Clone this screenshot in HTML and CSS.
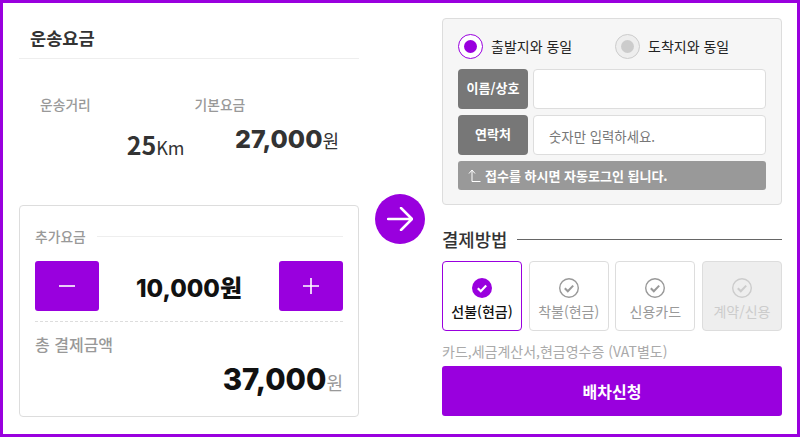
FILE: index.html
```html
<!DOCTYPE html>
<html lang="ko">
<head>
    <meta charset="UTF-8">
    <meta name="viewport" content="width=device-width, initial-scale=1.0">
    <title>운송요금</title>
    <link rel="stylesheet" href="styles.css">
</head>
<body>
    <div class="frame">
        <div class="left">
            <h2 class="fare-title">운송요금</h2>
            <div class="fare-stats">
                <div class="stat">
                    <div class="stat-label">운송거리</div>
                    <div class="stat-value stat-distance"><b>25</b>Km</div>
                </div>
                <div class="stat">
                    <div class="stat-label">기본요금</div>
                    <div class="stat-value stat-base"><b>27,000</b>원</div>
                </div>
            </div>
            <div class="extra-box">
                <div class="extra-head"><span>추가요금</span></div>
                <div class="stepper">
                    <button class="step-btn"><svg width="16" height="16" viewBox="0 0 16 16"><path d="M0 8h16" stroke="#fff" stroke-width="1.6"/></svg></button>
                    <div class="step-value">10,000<span>원</span></div>
                    <button class="step-btn"><svg width="16" height="16" viewBox="0 0 16 16"><path d="M0 8h16M8 0v16" stroke="#fff" stroke-width="1.6"/></svg></button>
                </div>
                <div class="total-label">총 결제금액</div>
                <div class="total-value"><b>37,000</b>원</div>
            </div>
        </div>

        <div class="arrow-col">
            <div class="arrow-circle">
                <svg width="26" height="24" viewBox="0 0 26 24"><path d="M1 12h24M14 1l11 11-11 11" fill="none" stroke="#fff" stroke-width="2.500" stroke-linecap="round" stroke-linejoin="round"/></svg>
            </div>
        </div>

        <div class="right">
            <div class="sender-box">
                <div class="radio-row">
                    <label class="radio on"><i></i>출발지와 동일</label>
                    <label class="radio"><i></i>도착지와 동일</label>
                </div>
                <div class="field">
                    <div class="field-label">이름/상호</div>
                    <div class="field-input"></div>
                </div>
                <div class="field">
                    <div class="field-label">연락처</div>
                    <div class="field-input">숫자만 입력하세요.</div>
                </div>
                <div class="notice">
                    <svg width="13" height="13" viewBox="0 0 13 13"><path d="M1 4.500l3-3.500 3 3.500M4 1.500v11h8.500" fill="none" stroke="#fff" stroke-width="1"/></svg>
                    접수를 하시면 자동로그인 됩니다.
                </div>
            </div>

            <div class="pay-head"><span>결제방법</span></div>
            <div class="pay-options">
                <div class="pay-option active">
                    <svg class="check" width="20" height="20" viewBox="0 0 20 20"><circle cx="10" cy="10" r="10" fill="#9900de"/><path d="M5.800 10.200l3 3 5.400-5.600" fill="none" stroke="#fff" stroke-width="2.200"/></svg>
                    선불(현금)
                </div>
                <div class="pay-option">
                    <svg class="check" width="20" height="20" viewBox="0 0 20 20"><circle cx="10" cy="10" r="9.300" fill="none" stroke="#999" stroke-width="1.400"/><path d="M5.800 10.200l3 3 5.400-5.600" fill="none" stroke="#999" stroke-width="2"/></svg>
                    착불(현금)
                </div>
                <div class="pay-option">
                    <svg class="check" width="20" height="20" viewBox="0 0 20 20"><circle cx="10" cy="10" r="9.300" fill="none" stroke="#999" stroke-width="1.400"/><path d="M5.800 10.200l3 3 5.400-5.600" fill="none" stroke="#999" stroke-width="2"/></svg>
                    신용카드
                </div>
                <div class="pay-option disabled">
                    <svg class="check" width="20" height="20" viewBox="0 0 20 20"><circle cx="10" cy="10" r="9.300" fill="none" stroke="#ccc" stroke-width="1.400"/><path d="M5.800 10.200l3 3 5.400-5.600" fill="none" stroke="#ccc" stroke-width="2"/></svg>
                    계약/신용
                </div>
            </div>
            <p class="pay-note">카드,세금계산서,현금영수증 (VAT별도)</p>
            <button class="submit-btn">배차신청</button>
        </div>
    </div>
</body>
</html>
```

FILE: styles.css
```css
/* General Styling */
* {
    box-sizing: border-box;
}

html, body {
    margin: 0;
    padding: 0;
    height: 100%;
    overflow: hidden;
}

body {
    font-family: "Noto Sans CJK KR", "Noto Sans", sans-serif;
    background: #ffffff;
    color: #333333;
}

button {
    border: none;
    cursor: pointer;
    font-family: inherit;
}

.frame {
    display: flex;
    width: 800px;
    height: 437px;
    border: 3px solid #9900de;
    padding: 15px 15px 17px 16px;
}

/* Left column */
.left {
    width: 340px;
    display: flex;
    flex-direction: column;
}

.fare-title {
    margin: 0;
    height: 41px;
    padding: 8px 0 0 11px;
    font-size: 17.600px;
    line-height: 24px;
    font-weight: 700;
    color: #333333;
    border-bottom: 1px solid #eeeeee;
}

.fare-stats {
    display: flex;
    padding: 35px 20px 0 21px;
    height: 146px;
    gap: 10px;
}

.stat {
    flex: 1;
}

.stat-label {
    font-size: 13.800px;
    line-height: 20px;
    font-weight: 500;
    color: #999999;
}

.stat-value {
    text-align: right;
    font-size: 18px;
    color: #333333;
}

.stat-value b {
    font-family: Inter, sans-serif;
    font-weight: 800;
}

.stat-distance {
    margin-top: 12px;
    line-height: 36px;
}

.stat-distance b {
    font-family: "Noto Sans CJK KR", sans-serif;
    font-weight: 700;
    font-size: 25px;
}

.stat-base {
    margin-top: 7px;
    line-height: 36px;
}

.stat-base b {
    font-size: 25px;
}

.extra-box {
    height: 212px;
    border: 1px solid #dddddd;
    border-radius: 4px;
    padding: 19px 15px 0;
}

.extra-head {
    display: flex;
    align-items: center;
    gap: 11px;
    height: 22px;
    font-size: 13.800px;
    font-weight: 500;
    color: #999999;
}

.extra-head::after {
    content: "";
    flex: 1;
    border-top: 1px solid #eeeeee;
}

.stepper {
    display: flex;
    justify-content: space-between;
    height: 60px;
    margin-top: 14px;
}

.step-btn {
    width: 64px;
    height: 50px;
    border-radius: 3px;
    background: #9900de;
    display: flex;
    align-items: center;
    justify-content: center;
}

.step-value {
    font-family: Inter, sans-serif;
    font-size: 24px;
    line-height: 52px;
    font-weight: 800;
    color: #111111;
}

.step-value span {
    font-family: "Noto Sans CJK KR", sans-serif;
}

.total-label {
    border-top: 1px dashed #dddddd;
    padding-top: 10px;
    font-size: 16px;
    line-height: 24px;
    font-weight: 500;
    color: #999999;
}

.total-value {
    margin-top: 1px;
    text-align: right;
    font-size: 18px;
    line-height: 44px;
    color: #999999;
}

.total-value b {
    font-family: Inter, sans-serif;
    font-size: 29.500px;
    font-weight: 800;
    color: #111111;
}

/* Arrow */
.arrow-col {
    width: 83px;
    display: flex;
    justify-content: center;
    padding: 176px 2px 0 0;
}

.arrow-circle {
    width: 50px;
    height: 50px;
    border-radius: 50%;
    background: #9900de;
    display: flex;
    align-items: center;
    justify-content: center;
}

/* Right column */
.right {
    width: 340px;
}

.sender-box {
    height: 187px;
    background: #f6f6f6;
    border: 1px solid #dddddd;
    border-radius: 4px;
    padding: 15px;
}

.radio-row {
    display: flex;
    height: 35px;
}

.radio {
    flex: none;
    display: flex;
    align-items: flex-start;
    gap: 8px;
    width: 157px;
    font-size: 14px;
    line-height: 25px;
    color: #222222;
}

.radio i {
    flex: none;
    width: 25px;
    height: 25px;
    border-radius: 50%;
    border: 1px solid #cccccc;
    background: #eeeeee;
    position: relative;
}

.radio i::after {
    content: "";
    position: absolute;
    top: 5px;
    left: 5px;
    width: 13px;
    height: 13px;
    border-radius: 50%;
    background: #cccccc;
}

.radio.on i {
    border-color: #9900de;
    background: #ffffff;
}

.radio.on i::after {
    background: #9900de;
}

.field {
    display: flex;
    gap: 5px;
    height: 40px;
    margin-bottom: 6px;
}

.field-label {
    width: 70px;
    background: #777777;
    border-radius: 4px;
    color: #ffffff;
    font-size: 13px;
    font-weight: 700;
    text-align: center;
    line-height: 38px;
}

.field-input {
    flex: 1;
    background: #ffffff;
    border: 1px solid #dddddd;
    border-radius: 4px;
    padding-left: 15px;
    font-size: 13.400px;
    line-height: 40px;
    color: #777777;
}

.notice {
    display: flex;
    align-items: center;
    gap: 4px;
    height: 29px;
    padding-left: 10px;
    background: #999999;
    border-radius: 3px;
    color: #ffffff;
    font-size: 13px;
    font-weight: 700;
}

.pay-head {
    display: flex;
    align-items: center;
    gap: 10px;
    margin-top: 20px;
    height: 28px;
    font-size: 17.800px;
    font-weight: 500;
    color: #333333;
}

.pay-head::after {
    content: "";
    flex: 1;
    border-top: 1px solid #666666;
}

.pay-options {
    display: flex;
    justify-content: space-between;
    margin-top: 8px;
}

.pay-option {
    width: 80px;
    height: 70px;
    border: 1px solid #dddddd;
    border-radius: 4px;
    display: flex;
    flex-direction: column;
    align-items: center;
    padding-top: 16px;
    font-size: 14px;
    line-height: 20px;
    color: #999999;
}

.check {
    margin-bottom: 3px;
}

.pay-option.active {
    border-color: #9900de;
    color: #111111;
    font-weight: 500;
}

.pay-option.disabled {
    background: #eeeeee;
    color: #cccccc;
}

.pay-note {
    margin: 10px 0 5px;
    font-size: 14px;
    line-height: 20px;
    color: #aaaaaa;
}

.submit-btn {
    display: block;
    width: 340px;
    height: 50px;
    padding-bottom: 2px;
    border-radius: 3px;
    background: #9900de;
    color: #ffffff;
    font-size: 16px;
    font-weight: 700;
}
```
